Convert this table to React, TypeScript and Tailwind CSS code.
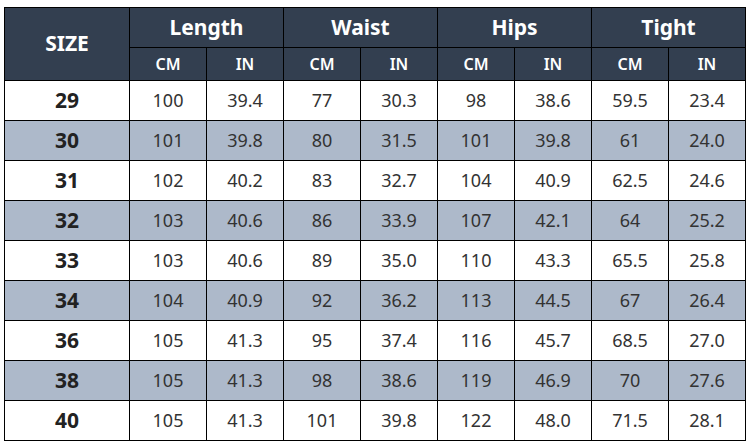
const groups = ["Length", "Waist", "Hips", "Tight"]

const rows: string[][] = [
    ["29", "100", "39.4", "77", "30.3", "98", "38.6", "59.5", "23.4"],
    ["30", "101", "39.8", "80", "31.5", "101", "39.8", "61", "24.0"],
    ["31", "102", "40.2", "83", "32.7", "104", "40.9", "62.5", "24.6"],
    ["32", "103", "40.6", "86", "33.9", "107", "42.1", "64", "25.2"],
    ["33", "103", "40.6", "89", "35.0", "110", "43.3", "65.5", "25.8"],
    ["34", "104", "40.9", "92", "36.2", "113", "44.5", "67", "26.4"],
    ["36", "105", "41.3", "95", "37.4", "116", "45.7", "68.5", "27.0"],
    ["38", "105", "41.3", "98", "38.6", "119", "46.9", "70", "27.6"],
    ["40", "105", "41.3", "101", "39.8", "122", "48.0", "71.5", "28.1"],
]

export default function App() {
    return (
        <div className="w-[749px] h-[446px] bg-white pt-[7px] pl-[4px] font-['Noto_Sans',sans-serif]">
            <table className="table-fixed border-collapse w-[741px] text-center">
                <colgroup>
                    <col className="w-[125px]" />
                    {Array.from({ length: 8 }).map((_, i) => <col key={i} className="w-[77px]" />)}
                </colgroup>
                <thead className="bg-[#333f50] text-white">
                    <tr className="h-[40px]">
                        <th rowSpan={2} className="border border-black text-[21px] font-bold p-0">SIZE</th>
                        {groups.map(g => (
                            <th key={g} colSpan={2} className="border border-black text-[21px] font-bold p-0">{g}</th>
                        ))}
                    </tr>
                    <tr className="h-[33px]">
                        {groups.map(g => (
                            <>
                                <th key={g + "cm"} className="border border-black text-[16px] font-semibold p-0">CM</th>
                                <th key={g + "in"} className="border border-black text-[16px] font-semibold p-0">IN</th>
                            </>
                        ))}
                    </tr>
                </thead>
                <tbody className="text-[#333]">
                    {rows.map((r, i) => (
                        <tr key={r[0]} className={"h-[40px] " + (i % 2 ? "bg-[#adb9ca]" : "bg-white")}>
                            {r.map((v, j) => (
                                <td key={j} className={"border border-black p-0 " + (j === 0 ? "text-[21px] font-bold text-[#222]" : "text-[18px]")}>{v}</td>
                            ))}
                        </tr>
                    ))}
                </tbody>
            </table>
        </div>
    )
}
